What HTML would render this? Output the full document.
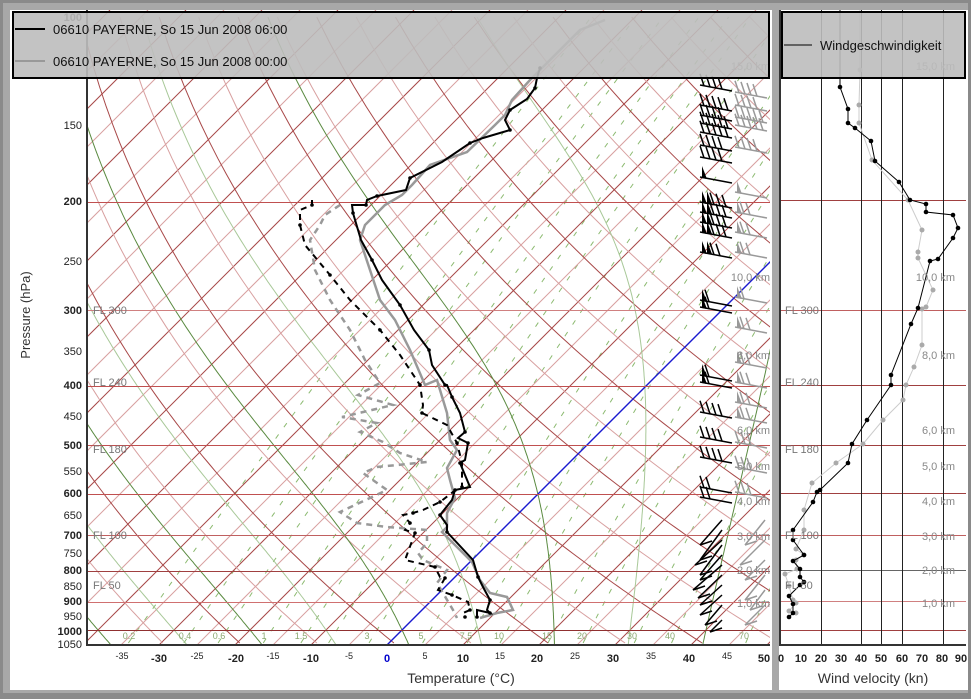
<!DOCTYPE html>
<html><head><meta charset="utf-8"><style>
html,body{margin:0;padding:0;width:971px;height:699px;overflow:hidden;background:#8a8a8a}
svg{display:block;font-family:"Liberation Sans",sans-serif}
</style></head><body>
<svg id="s" width="971" height="699" viewBox="0 0 971 699" xmlns="http://www.w3.org/2000/svg">
<defs>
<clipPath id="cp"><rect x="87" y="10" width="683" height="635"/></clipPath>
<clipPath id="cp2"><rect x="780" y="10" width="186" height="635"/></clipPath>
</defs>
<rect x="0" y="0" width="971" height="699" fill="#8a8a8a"/>
<rect x="3" y="3" width="965" height="690" fill="#a8a8a8"/>
<rect x="10" y="10" width="762" height="680" fill="#fff"/>
<rect x="779" y="10" width="189" height="680" fill="#fff"/>
<g id="grid" clip-path="url(#cp)"></g>
<g id="grid2" clip-path="url(#cp2)"></g>
<g id="data" clip-path="url(#cp)"></g>
<g id="data2" clip-path="url(#cp2)"></g>
<line x1="87" y1="10" x2="87" y2="646" stroke="#333" stroke-width="2"/>
<line x1="86" y1="645" x2="770" y2="645" stroke="#333" stroke-width="2"/>
<line x1="780" y1="10" x2="780" y2="646" stroke="#333" stroke-width="2"/>
<line x1="779" y1="645" x2="966" y2="645" stroke="#333" stroke-width="2"/>
<g font-size="11" text-anchor="end" fill="#222">
<text x="82" y="21" font-weight="bold">100</text>
<text x="82" y="129">150</text>
<text x="82" y="205" font-weight="bold">200</text>
<text x="82" y="265">250</text>
<text x="82" y="314" font-weight="bold">300</text>
<text x="82" y="355">350</text>
<text x="82" y="389" font-weight="bold">400</text>
<text x="82" y="420">450</text>
<text x="82" y="449" font-weight="bold">500</text>
<text x="82" y="475">550</text>
<text x="82" y="497" font-weight="bold">600</text>
<text x="82" y="519">650</text>
<text x="82" y="539" font-weight="bold">700</text>
<text x="82" y="557">750</text>
<text x="82" y="574" font-weight="bold">800</text>
<text x="82" y="590">850</text>
<text x="82" y="605" font-weight="bold">900</text>
<text x="82" y="620">950</text>
<text x="82" y="635" font-weight="bold">1000</text>
<text x="82" y="648">1050</text>
</g>
<text transform="translate(30,315) rotate(-90)" font-size="13" text-anchor="middle" fill="#333">Pressure (hPa)</text>
<g font-size="11" text-anchor="middle" fill="#222">
<text x="122" y="659" font-size="9">-35</text>
<text x="159" y="662" font-weight="bold">-30</text>
<text x="197" y="659" font-size="9">-25</text>
<text x="236" y="662" font-weight="bold">-20</text>
<text x="273" y="659" font-size="9">-15</text>
<text x="311" y="662" font-weight="bold">-10</text>
<text x="349" y="659" font-size="9">-5</text>
<text x="387" y="662" font-weight="bold" fill="#0000cc">0</text>
<text x="425" y="659" font-size="9">5</text>
<text x="463" y="662" font-weight="bold">10</text>
<text x="500" y="659" font-size="9">15</text>
<text x="537" y="662" font-weight="bold">20</text>
<text x="575" y="659" font-size="9">25</text>
<text x="613" y="662" font-weight="bold">30</text>
<text x="651" y="659" font-size="9">35</text>
<text x="689" y="662" font-weight="bold">40</text>
<text x="727" y="659" font-size="9">45</text>
<text x="764" y="662" font-weight="bold">50</text>
</g>
<text x="461" y="683" font-size="14" text-anchor="middle" fill="#333">Temperature (°C)</text>
<g font-size="11" text-anchor="middle" fill="#222" font-weight="bold">
<text x="781" y="662">0</text><text x="801" y="662">10</text><text x="821" y="662">20</text><text x="841" y="662">30</text><text x="861" y="662">40</text><text x="881" y="662">50</text><text x="902" y="662">60</text><text x="922" y="662">70</text><text x="942" y="662">80</text><text x="961" y="662">90</text>
</g>
<text x="873" y="683" font-size="14" text-anchor="middle" fill="#333">Wind velocity (kn)</text>
<g font-size="9" text-anchor="middle" fill="#8aa870">
<text x="129" y="639">0.2</text><text x="185" y="639">0.4</text><text x="219" y="639">0.6</text><text x="264" y="639">1</text><text x="301" y="639">1.5</text><text x="367" y="639">3</text><text x="421" y="639">5</text><text x="466" y="639">7.5</text><text x="499" y="639">10</text><text x="547" y="639">15</text><text x="582" y="639">20</text><text x="632" y="639">30</text><text x="670" y="639">40</text><text x="744" y="639">70</text>
</g>
<g font-size="11" fill="#777">
<text x="93" y="314">FL 300</text><text x="93" y="386">FL 240</text><text x="93" y="453">FL 180</text><text x="93" y="539">FL 100</text><text x="93" y="589">FL 50</text>
<text x="785" y="314">FL 300</text><text x="785" y="386">FL 240</text><text x="785" y="453">FL 180</text><text x="785" y="539">FL 100</text><text x="785" y="589">FL 50</text>
</g>
<g font-size="11" fill="#888" text-anchor="end">
<text x="770" y="70">15,0 km</text><text x="770" y="281">10,0 km</text><text x="770" y="359">8,0 km</text><text x="770" y="434">6,0 km</text><text x="770" y="470">5,0 km</text><text x="770" y="505">4,0 km</text><text x="770" y="540">3,0 km</text><text x="770" y="574">2,0 km</text><text x="770" y="607">1,0 km</text>
<text x="955" y="70">15,0 km</text><text x="955" y="281">10,0 km</text><text x="955" y="359">8,0 km</text><text x="955" y="434">6,0 km</text><text x="955" y="470">5,0 km</text><text x="955" y="505">4,0 km</text><text x="955" y="540">3,0 km</text><text x="955" y="574">2,0 km</text><text x="955" y="607">1,0 km</text>
</g>
<rect x="13" y="12" width="756" height="66" fill="#bdbdbd" fill-opacity="0.9" stroke="#000" stroke-width="2"/>
<line x1="15" y1="29" x2="45" y2="29" stroke="#000" stroke-width="2"/>
<text x="53" y="34" font-size="13" fill="#111">06610 PAYERNE, So 15 Jun 2008 06:00</text>
<line x1="15" y1="61" x2="45" y2="61" stroke="#999" stroke-width="2"/>
<text x="53" y="66" font-size="13" fill="#111">06610 PAYERNE, So 15 Jun 2008 00:00</text>
<rect x="782" y="12" width="183" height="66" fill="#bdbdbd" fill-opacity="0.9" stroke="#000" stroke-width="2"/>
<line x1="784" y1="45" x2="812" y2="45" stroke="#000" stroke-width="1"/>
<text x="820" y="50" font-size="13" fill="#111">Windgeschwindigkeit</text>
</svg>
<script>
(function(){
var NS="http://www.w3.org/2000/svg";
function Y(p){return 630+266.2*Math.log(p/1000);}
function X(T,p){return 387+7.6*T+(645-Y(p));}
function el(g,n,a){var e=document.createElementNS(NS,n);for(var k in a)e.setAttribute(k,a[k]);g.appendChild(e);return e;}
var g=document.getElementById('grid'),g2=document.getElementById('grid2'),d=document.getElementById('data'),d2=document.getElementById('data2');
function poly(gr,pts,st){pts=pts.filter(function(q){return isFinite(q[0])&&isFinite(q[1]);});var s=pts.map(function(q){return q[0].toFixed(1)+','+q[1].toFixed(1)}).join(' ');var a={points:s,fill:'none'};for(var k in st)a[k]=st[k];return el(gr,'polyline',a);}
[0.2,0.4,0.6,1,1.5,2,3,5,7.5,10,15,20,30,40,70].forEach(function(w){var pts=[];for(var p=1050;p>=100;p-=10){var e=w*p/(622+w);var l=Math.log(e/6.112);var T=243.5*l/(17.67-l);pts.push([X(T,p),Y(p)]);}poly(g,pts,{stroke:'#8cba70','stroke-width':1,'stroke-dasharray':'5,9'});});
for(var T=-130;T<=50;T+=5){if(T===0)continue;var dark=(T%10===0);var x1=387+7.6*T;el(g,'line',{x1:x1,y1:645,x2:x1+635,y2:10,stroke:(dark?'#a84848':'#d8a0a0'),'stroke-width':1});}
for(var th=230,i=0;th<=500;th+=10,i++){var pts=[];for(var p=1050;p>=100;p-=10){var T=th*Math.pow(p/1000,0.2857)-273.15;pts.push([X(T,p),Y(p)]);}poly(g,pts,{stroke:(i%2?'#d8a0a0':'#a84848'),'stroke-width':1});}
function es(T){return 6.112*Math.exp(17.67*T/(T+243.5));}
for(var T0=-40;T0<=40;T0+=10){[1,-1].forEach(function(dir){var T=T0+273.15,p=1000,pts=[[X(T0,1000),Y(1000)]];var n=0;while(p>100&&p<=1050&&n<400){n++;var Tc=T-273.15;var rs=0.622*es(Tc)/(p-es(Tc));var dTdp=(287*T+2.5e6*rs)/(p*(1004+2.5e6*2.5e6*rs*0.622/(287*T*T)));var dp=-5*dir;T+=dTdp*dp;p+=dp;pts.push([X(T-273.15,p),Y(p)]);if(T<150)break;}poly(g,pts,{stroke:(T0%20===0?'#5a8a40':'#a8c898'),'stroke-width':1});});}
el(g,'line',{x1:387,y1:645,x2:1022,y2:10,stroke:'#1a1ad0','stroke-width':1.4});
var H=[[200,'#c05050'],[300,'#d08080'],[400,'#c05050'],[500,'#c05050'],[600,'#c05050'],[700,'#c06060'],[800,'#a04040'],[900,'#d07070'],[1000,'#903030']];
H.forEach(function(h){var y=Math.round(Y(h[0]))+0.5;el(g,'line',{x1:87,y1:y,x2:770,y2:y,stroke:h[1]});});
var H2=[[200,'#a04040'],[310,'#c06060'],[385,'#a04040'],[445,'#a04040'],[493,'#a04040'],[535,'#c06060'],[570,'#666'],[601,'#d08080'],[630,'#a04040']];
H2.forEach(function(h){el(g2,'line',{x1:780,y1:h[0]+0.5,x2:966,y2:h[0]+0.5,stroke:h[1]});});
[821,861,881,902,943].forEach(function(x){el(g2,'line',{x1:x+0.5,y1:10,x2:x+0.5,y2:645,stroke:'#222'});});
var bt=[[540,68],[537,78],[535,88],[527,99],[510,110],[505,120],[510,130],[483,138],[470,143],[442,162],[410,178],[406,190],[377,196],[367,200],[366,205],[352,205],[353,213],[361,240],[372,260],[382,280],[400,305],[414,330],[429,350],[432,365],[445,385],[447,385],[452,397],[460,413],[465,432],[458,438],[468,443],[465,460],[460,463],[470,487],[455,490],[452,500],[440,515],[447,525],[447,532],[473,560],[478,577],[483,587],[490,600],[487,610],[490,613],[477,610],[477,617]];
var bd=[[312,200],[312,205],[300,210],[300,225],[305,245],[330,275],[350,300],[380,330],[400,355],[420,385],[423,405],[422,413],[447,425],[457,443],[462,463],[462,487],[453,492],[440,502],[423,510],[413,513],[403,515],[410,523],[405,530],[415,533],[405,560],[435,567],[440,577],[445,578],[438,590],[452,595],[468,602],[470,610],[463,613],[465,617]];
var gt=[[605,20],[580,30],[560,50],[530,80],[512,100],[505,115],[495,125],[467,152],[430,165],[412,185],[402,195],[385,205],[365,225],[360,240],[370,270],[380,300],[395,320],[410,350],[425,385],[437,380],[447,413],[450,440],[457,450],[447,468],[450,480],[455,498],[447,513],[447,527],[442,532],[472,562],[480,580],[490,593],[507,597],[513,610],[497,613],[480,618]];
var gd=[[340,205],[325,215],[320,225],[310,240],[315,270],[330,300],[350,330],[365,360],[378,380],[380,383],[358,395],[393,405],[342,417],[377,423],[360,432],[383,442],[400,453],[427,462],[377,467],[363,473],[387,490],[340,512],[357,523],[387,527],[427,530],[427,543],[418,553],[423,560],[447,570],[437,583],[443,593],[453,610],[457,618]];
poly(d,gt,{stroke:'#999','stroke-width':2.5});
poly(d,gd,{stroke:'#999','stroke-width':2.5,'stroke-dasharray':'6,5'});
poly(d,bt,{stroke:'#000','stroke-width':2});
poly(d,bd,{stroke:'#000','stroke-width':2,'stroke-dasharray':'6,5'});
bt.concat(bd).forEach(function(q,i){if(i%2==0)el(d,'circle',{cx:q[0],cy:q[1],r:1.8,fill:'#000'});});
function barb(x,y,n,pen,col){var L=32;el(d,'line',{x1:x,y1:y-3,x2:x+L,y2:y+3,stroke:col,'stroke-width':1.5});for(var i=0;i<pen;i++){var xx=x+2+i*5;el(d,'polygon',{points:xx+','+(y-2)+' '+xx+','+(y-14)+' '+(xx+5)+','+(y-1),fill:col});}for(var i=0;i<n;i++){var xx=x+4+(pen*5)+i*6;var yy=y-3+(xx-x)*6/L;el(d,'line',{x1:xx,y1:yy,x2:xx-4,y2:yy-12,stroke:col,'stroke-width':1.5});}}
var blk=[[88,4,0],[108,5,0],[118,4,0],[126,5,0],[135,5,0],[148,4,0],[160,4,0],[180,0,1],[205,3,2],[215,3,2],[225,3,2],[235,3,2],[255,2,2],[303,1,1],[310,1,1],[378,1,1],[385,1,1],[415,4,0],[440,4,0],[460,4,0],[490,2,0],[500,2,0]];
blk.forEach(function(b){barb(700,b[0],b[1],b[2],'#000');});
var gry=[[95,4,0],[108,4,0],[120,5,0],[128,5,0],[150,4,0],[195,0,1],[215,2,1],[235,2,1],[255,2,1],[300,1,1],[330,2,1],[365,2,1],[385,2,1],[405,2,1],[420,2,1],[445,3,0],[470,3,0],[495,3,0]];
gry.forEach(function(b){barb(735,b[0],b[1],b[2],'#999');});
var lb=[[520,700,545],[530,700,560],[540,695,565],[545,700,575],[555,700,580],[565,693,590],[575,698,598],[585,700,605],[595,700,615],[605,705,625],[620,710,632]];
lb.forEach(function(b){el(d,'line',{x1:722,y1:b[0],x2:b[1],y2:b[2],stroke:'#000','stroke-width':1.5});el(d,'line',{x1:b[1],y1:b[2],x2:b[1]+12,y2:b[2]-4,stroke:'#000','stroke-width':1.5});});
var lg=[[520,745,545],[540,740,565],[560,745,580],[575,745,600],[590,750,610],[605,745,625]];
lg.forEach(function(b){el(d,'line',{x1:765,y1:b[0],x2:b[1],y2:b[2],stroke:'#999','stroke-width':1.5});el(d,'line',{x1:b[1],y1:b[2],x2:b[1]+12,y2:b[2]-4,stroke:'#999','stroke-width':1.5});});
var wb=[[840,10],[840,87],[848,109],[848,123],[855,128],[871,141],[875,161],[899,182],[910,200],[926,204],[926,212],[953,215],[958,228],[953,238],[938,259],[930,261],[918,308],[911,324],[891,375],[891,385],[867,420],[852,444],[848,463],[820,490],[817,492],[813,502],[793,530],[793,540],[804,555],[793,561],[800,569],[800,577],[804,582],[800,585],[789,596],[793,604],[793,613],[789,617]];
var wg=[[860,10],[860,70],[859,105],[859,123],[872,160],[908,200],[922,230],[918,252],[918,258],[933,290],[926,307],[922,309],[922,345],[914,367],[906,385],[903,400],[883,420],[863,444],[836,463],[812,483],[804,510],[804,530],[796,549],[804,555],[796,560],[797,569],[785,574],[789,586],[793,600],[796,603],[789,611],[796,613]];
poly(d2,wg,{stroke:'#ccc','stroke-width':1});
wg.forEach(function(q,i){if(i>0)el(d2,'circle',{cx:q[0],cy:q[1],r:2.5,fill:'#aaa'});});
poly(d2,wb,{stroke:'#000','stroke-width':1});
wb.forEach(function(q,i){if(i>0)el(d2,'circle',{cx:q[0],cy:q[1],r:2.3,fill:'#000'});});
})();
</script>
</body></html>
